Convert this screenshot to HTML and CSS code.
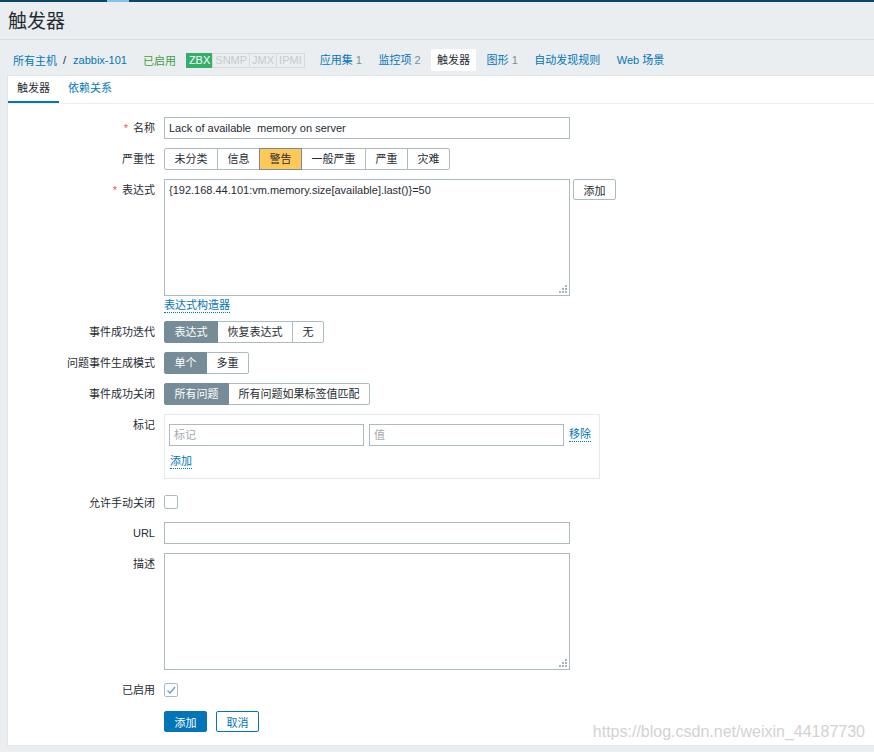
FILE: index.html
```html
<!DOCTYPE html>
<html lang="zh-CN">
<head>
<meta charset="utf-8">
<title>触发器</title>
<link rel="stylesheet" href="styles.css">
</head>
<body>
<div class="topbar"><span class="topbar-hl"></span></div>
<header class="header"><h1 class="title">触发器</h1></header>
<nav class="nav">
  <a class="link">所有主机</a><span class="sep">/</span><a class="link">zabbix-101</a>
  <span class="status">已启用</span>
  <span class="badges"><span class="badge badge-on">ZBX</span><span class="badge">SNMP</span><span class="badge">JMX</span><span class="badge">IPMI</span></span>
  <ul class="host-tabs">
    <li class="host-tab"><a class="link">应用集</a> <span class="count">1</span></li>
    <li class="host-tab"><a class="link">监控项</a> <span class="count">2</span></li>
    <li class="host-tab host-tab-active">触发器</li>
    <li class="host-tab"><a class="link">图形</a> <span class="count">1</span></li>
    <li class="host-tab"><a class="link">自动发现规则</a></li>
    <li class="host-tab"><a class="link">Web 场景</a></li>
  </ul>
</nav>
<main class="panel">
  <ul class="tabs">
    <li class="tab tab-active">触发器</li>
    <li class="tab">依赖关系</li>
  </ul>
  <div class="form">
    <div class="row">
      <div class="label"><span class="req">*</span>名称</div>
      <input class="text w406" type="text" value="Lack of available  memory on server">
    </div>
    <div class="row">
      <div class="label">严重性</div>
      <div class="radio">
        <span class="opt">未分类</span><span class="opt">信息</span><span class="opt opt-warn">警告</span><span class="opt">一般严重</span><span class="opt">严重</span><span class="opt">灾难</span>
      </div>
    </div>
    <div class="row">
      <div class="label"><span class="req">*</span>表达式</div>
      <div class="field">
        <div class="expr-line">
          <div class="area-wrap">
            <textarea class="area">{192.168.44.101:vm.memory.size[available].last()}=50</textarea>
            <svg class="grip" width="8" height="8" viewBox="0 0 8 8"><rect x="6" y="0" width="2" height="2"/><rect x="3" y="3" width="2" height="2"/><rect x="6" y="3" width="2" height="2"/><rect x="0" y="6" width="2" height="2"/><rect x="3" y="6" width="2" height="2"/><rect x="6" y="6" width="2" height="2"/></svg>
          </div>
          <button class="btn-alt">添加</button>
        </div>
        <div class="builder"><a class="dotted">表达式构造器</a></div>
      </div>
    </div>
    <div class="row">
      <div class="label">事件成功迭代</div>
      <div class="radio">
        <span class="opt opt-on">表达式</span><span class="opt">恢复表达式</span><span class="opt">无</span>
      </div>
    </div>
    <div class="row">
      <div class="label">问题事件生成模式</div>
      <div class="radio">
        <span class="opt opt-on">单个</span><span class="opt">多重</span>
      </div>
    </div>
    <div class="row">
      <div class="label">事件成功关闭</div>
      <div class="radio">
        <span class="opt opt-on">所有问题</span><span class="opt">所有问题如果标签值匹配</span>
      </div>
    </div>
    <div class="row">
      <div class="label">标记</div>
      <div class="tagbox">
        <div class="tag-line">
          <input class="text w195" type="text" placeholder="标记">
          <input class="text w195" type="text" placeholder="值">
          <a class="dotted">移除</a>
        </div>
        <div class="tag-add"><a class="dotted">添加</a></div>
      </div>
    </div>
    <div class="row row-check">
      <div class="label">允许手动关闭</div>
      <span class="checkbox"></span>
    </div>
    <div class="row">
      <div class="label">URL</div>
      <input class="text w406" type="text">
    </div>
    <div class="row">
      <div class="label">描述</div>
      <div class="area-wrap">
        <textarea class="area"></textarea>
        <svg class="grip" width="8" height="8" viewBox="0 0 8 8"><rect x="6" y="0" width="2" height="2"/><rect x="3" y="3" width="2" height="2"/><rect x="6" y="3" width="2" height="2"/><rect x="0" y="6" width="2" height="2"/><rect x="3" y="6" width="2" height="2"/><rect x="6" y="6" width="2" height="2"/></svg>
      </div>
    </div>
    <div class="row row-enabled">
      <div class="label">已启用</div>
      <span class="checkbox"><svg width="12" height="12" viewBox="0 0 12 12"><polyline points="2.5,6.5 5,9 10,3" fill="none" stroke="#5a9fd0" stroke-width="1.2"/></svg></span>
    </div>
    <div class="row row-buttons">
      <div class="label"></div>
      <div class="actions">
        <button class="btn-primary">添加</button>
        <button class="btn-cancel">取消</button>
      </div>
    </div>
  </div>
</main>
<div class="watermark">https://blog.csdn.net/weixin_44187730</div>
</body>
</html>
```

FILE: styles.css
```css
* { box-sizing: border-box; }
html, body { margin: 0; padding: 0; }
body {
  position: relative;
  width: 874px;
  height: 752px;
  overflow: hidden;
  background: #ebeef0;
  font-family: "Liberation Sans", "Noto Sans CJK SC", sans-serif;
  font-size: 11px;
  color: #1f2c33;
}
.topbar { display: flex; height: 2px; background: #0a466a; }
.topbar-hl { margin-left: 107px; width: 22px; background: #80c4f0; }

.header { height: 38px; padding: 8px 0 0 8px; border-bottom: 1px solid #d9dfe3; }
.title { margin: 0; font-size: 19px; line-height: 23px; font-weight: normal; color: #1f2c33; }

.nav { display: flex; align-items: center; height: 22px; margin: 9px 0 4px 13px; white-space: nowrap; }
.link { color: #0275b8; text-decoration: none; }
.sep { margin: 0 7px 0 6px; color: #1f2c33; }
.status { margin-left: 16px; color: #429e47; }
.badges { display: flex; margin-left: 10px; }
.badge {
  height: 15px;
  line-height: 13px;
  padding: 0 2px;
  border: 1px solid #d5dadd;
  color: #c4cbcf;
  margin-left: -1px;
}
.badge-on { background: #34af67; border-color: #34af67; color: #fff; margin-left: 0; }
.host-tabs { display: flex; list-style: none; margin: 0 0 0 9px; padding: 0; gap: 4.5px; }
.host-tab { padding: 0 6px; line-height: 22px; height: 22px; border-radius: 2px; }
.host-tab-active { background: #fff; color: #1f2c33; }
.count { color: #768d99; }

.panel {
  margin-left: 7px;
  background: #fff;
  border: 1px solid #dfe4e7;
  border-right: none;
}
.tabs { display: flex; list-style: none; margin: 0; padding: 0; border-bottom: 1px solid #ebeef0; }
.tab {
  padding: 0 9px;
  line-height: 25px;
  border-bottom: 2px solid transparent;
  color: #0275b8;
}
.tab-active { border-bottom-color: #0275b8; color: #1f2c33; }

.form { display: flex; flex-direction: column; gap: 9px; padding: 13px 0 13px 0; }
.row { display: flex; align-items: flex-start; gap: 9px; }
.label {
  flex: 0 0 147px;
  text-align: right;
  line-height: 22px;
  white-space: nowrap;
}
.req { color: #e45959; margin-right: 5px; }

.text {
  height: 22px;
  border: 1px solid #acbbc2;
  padding: 0 4px;
  font: inherit;
  color: #1f2c33;
  background: #fff;
  outline: none;
}
.text::placeholder { color: #a9a9a9; }
.w406 { width: 406px; }
.w195 { width: 195px; flex: 0 0 195px; }

.radio { display: flex; }
.opt {
  height: 22px;
  line-height: 20px;
  padding: 0 9.5px;
  border: 1px solid #acbbc2;
  margin-left: -1px;
  background: #fff;
  white-space: nowrap;
}
.opt:first-child { margin-left: 0; border-radius: 2px 0 0 2px; }
.opt:last-child { border-radius: 0 2px 2px 0; }
.opt-warn { background: #ffc859; border-color: #768d99; position: relative; }
.opt-on { background: #768d99; border-color: #768d99; color: #fff; position: relative; }

.field { display: flex; flex-direction: column; }
.expr-line { display: flex; align-items: flex-start; gap: 3px; }
.area-wrap { position: relative; width: 406px; height: 117px; }
.area {
  display: block;
  width: 406px;
  height: 117px;
  border: 1px solid #acbbc2;
  padding: 3px 4px;
  font: inherit;
  line-height: 14px;
  color: #1f2c33;
  resize: none;
  outline: none;
  background: #fff;
}
.grip { position: absolute; right: 3px; bottom: 3px; fill: #a9b3b8; }
.btn-alt {
  height: 21px;
  width: 43px;
  padding: 0;
  border: 1px solid #acbbc2;
  border-radius: 2px;
  background: #fff;
  font: inherit;
  color: #1f2c33;
}
.builder { height: 16px; padding-top: 3px; }
.dotted {
  display: inline-block;
  color: #0275b8;
  line-height: 13px;
  border-bottom: 1px dotted #0275b8;
  white-space: nowrap;
}

.tagbox {
  width: 436px;
  border: 1px solid #e5e9eb;
  padding: 9px 4px 8px 4px;
}
.tag-line { display: flex; align-items: center; gap: 5px; white-space: nowrap; }
.tag-add { margin-top: 6px; height: 18px; padding-top: 3px; padding-left: 1px; }

.row-check .label { padding-top: 4px; }
.row-check { height: 25px; }
.checkbox {
  display: flex;
  align-items: center;
  justify-content: center;
  width: 14px;
  height: 14px;
  border: 1px solid #acbbc2;
  border-radius: 2px;
  background: #fff;
  margin-top: 7px;
}
.row-check .checkbox { margin-top: 7px; }
.row-enabled .checkbox { margin-top: 4px; }

.row-buttons { margin-top: 1px; }
.actions { display: flex; gap: 9px; }
.btn-primary, .btn-cancel {
  height: 21px;
  width: 43px;
  padding: 0;
  border-radius: 2px;
  font: inherit;
}
.btn-primary { background: #0275b8; border: 1px solid #0275b8; color: #fff; }
.btn-cancel { background: #fff; border: 1px solid #0275b8; color: #0275b8; }

.watermark {
  position: absolute;
  right: 9px;
  top: 722px;
  font-family: "Liberation Sans", sans-serif;
  font-size: 16px;
  line-height: 20px;
  color: #d2d2d2;
  white-space: nowrap;
}
```
